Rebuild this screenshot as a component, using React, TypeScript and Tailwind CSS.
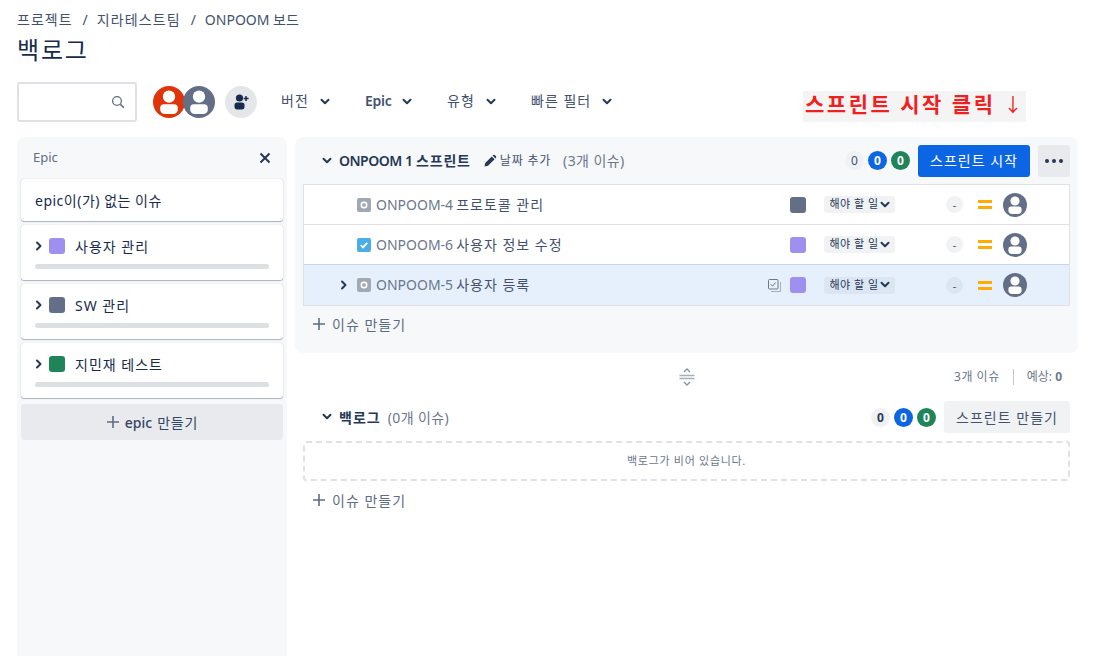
const font = "font-['Noto_Sans','Noto_Sans_CJK_KR',sans-serif]";

const Avatar = ({ color, size }: { color: string; size: number }) => (
  <svg width={size} height={size} viewBox="0 0 24 24" className="shrink-0">
    <circle cx="12" cy="12" r="12" fill={color} />
    <circle cx="12" cy="8" r="4.6" fill="#fff" />
    <path d="M5.4 16.4a2.8 2.8 0 0 1 2.8-2.8h7.6a2.8 2.8 0 0 1 2.8 2.8v1.4c0 1.9-1.6 3.2-3.4 3.2H8.8c-1.8 0-3.4-1.3-3.4-3.2z" fill="#fff" />
  </svg>
);

const ChevronDown = ({ className = "" }: { className?: string }) => (
  <svg width="10" height="8" viewBox="0 0 10 8" className={className}>
    <path d="M1.5 1.8 5 5.3l3.5-3.5" fill="none" stroke="#253858" strokeWidth="2" strokeLinecap="round" strokeLinejoin="round" />
  </svg>
);

const ChevronRight = () => (
  <svg width="8" height="10" viewBox="0 0 8 10" className="shrink-0">
    <path d="M2 1.5 5.5 5 2 8.5" fill="none" stroke="#253858" strokeWidth="2" strokeLinecap="round" strokeLinejoin="round" />
  </svg>
);

const Plus = () => (
  <svg width="14" height="14" viewBox="0 0 14 14" className="shrink-0">
    <path d="M7 1v12M1 7h12" stroke="#5e6c84" strokeWidth="1.6" />
  </svg>
);

const TaskIcon = ({ done }: { done?: boolean }) =>
  done ? (
    <svg width="14" height="14" viewBox="0 0 14 14" className="shrink-0">
      <rect width="14" height="14" rx="2" fill="#4bade8" />
      <path d="M3.8 7.2 6 9.4l4.2-4.6" fill="none" stroke="#fff" strokeWidth="1.8" />
    </svg>
  ) : (
    <svg width="14" height="14" viewBox="0 0 14 14" className="shrink-0">
      <rect width="14" height="14" rx="2" fill="#a0a8b4" />
      <rect x="4.4" y="4.4" width="5.2" height="5.2" rx="2.2" fill="none" stroke="#fff" strokeWidth="1.6" />
    </svg>
  );

const Counts = ({ dark }: { dark?: boolean }) => (
  <div className="flex items-center gap-[4px] text-[12px] leading-[19px]">
    <span className={`h-[19px] w-[19px] rounded-full bg-[#f0f1f4] text-center ${dark ? "font-bold text-[#253858]" : "text-[#42526e]"}`}>0</span>
    <span className="h-[19px] w-[19px] rounded-full bg-[#0c66e4] text-center font-bold text-white">0</span>
    <span className="h-[19px] w-[19px] rounded-full bg-[#1f845a] text-center font-bold text-white">0</span>
  </div>
);

const EpicCard = ({ name, color }: { name: string; color: string }) => (
  <div className="h-[55px] rounded-[3px] bg-white px-[14px] pt-[13px] shadow-[0_1px_1px_rgba(9,30,66,0.3),0_0_1px_rgba(9,30,66,0.25)]">
    <div className="flex h-[16px] items-center">
      <ChevronRight />
      <span className={`ml-[6px] h-[16px] w-[16px] rounded-[3px] ${color}`} />
      <span className="ml-[10px] text-[14px] tracking-[1px] text-[#172b4d]">{name}</span>
    </div>
    <div className="mt-[10px] h-[5px] rounded-[3px] bg-[#dcdfe4]" />
  </div>
);

const IssueRow = ({
  id,
  title,
  epic,
  done,
  selected,
}: {
  id: string;
  title: string;
  epic: string;
  done?: boolean;
  selected?: boolean;
}) => (
  <div
    className={`flex items-center ${
      selected ? "h-[41px] border-t border-[#c9d4e4] bg-[#e6f0fc]" : "h-[40px] border-t border-[#dfe1e6] first:h-[39px] first:border-t-0"
    }`}
  >
    <div className="flex w-[53px] justify-end pr-[9px]">{selected && <ChevronRight />}</div>
    <TaskIcon done={done} />
    <span className="-mt-[1px] ml-[5px] text-[14px] text-[#6b778c]">{id}</span>
    <span className="-mt-[1px] ml-[3px] text-[14px] tracking-[1px] text-[#42526e]">{title}</span>
    <div className="ml-auto flex items-center">
      {selected && (
        <svg width="13" height="13" viewBox="0 0 13 13" className="mr-[9px] shrink-0">
          <rect x="0.5" y="0.5" width="9.5" height="9.5" rx="1" fill="none" stroke="#6b778c" />
          <path d="M2.7 5.2 4.6 7.2l3-3.7" fill="none" stroke="#6b778c" />
          <path d="M12.5 3v9.5H3" fill="none" stroke="#a5adba" />
        </svg>
      )}
      <span className={`h-[16px] w-[16px] rounded-[3px] ${epic}`} />
      <div
        className={`ml-[18px] flex h-[17px] w-[71px] items-center justify-center gap-[1px] rounded-[3px] text-[11px] tracking-[0.5px] text-[#253858] ${
          selected ? "bg-[#dce6f3]" : "bg-[#f1f2f4]"
        }`}
      >
        해야 할 일
        <ChevronDown />
      </div>
      <span
        className={`ml-[51px] h-[17px] w-[17px] rounded-full text-center text-[11px] leading-[17px] text-[#42526e] ${
          selected ? "bg-[#dce6f3]" : "bg-[#f1f2f4]"
        }`}
      >
        -
      </span>
      <div className="ml-[15px] flex w-[14px] flex-col gap-[3px]">
        <span className="h-[3px] bg-[#ffab00]" />
        <span className="h-[3px] bg-[#ffab00]" />
      </div>
      <div className="ml-[11px] mr-[42px]">
        <Avatar color="#626f86" size={24} />
      </div>
    </div>
  </div>
);

const CreateIssue = () => (
  <div className="flex h-[20px] items-center gap-[6px] pl-[9px] text-[14px] tracking-[1px] text-[#5e6c84]">
    <Plus />
    이슈 만들기
  </div>
);

const Filter = ({ label, width, bold }: { label: string; width: number; bold?: boolean }) => (
  <div className="flex items-center justify-between" style={{ width }}>
    <span className={`-mt-[3px] text-[14px] text-[#42526e] ${bold ? "font-semibold tracking-[-0.3px]" : "tracking-[1px]"}`}>{label}</span>
    <ChevronDown />
  </div>
);

export default function App() {
  return (
    <div className={`${font} h-[656px] w-[1100px] overflow-hidden bg-white pl-[17px] pr-[22px] text-[#172b4d]`}>
      <div className="flex h-[20px] items-center pt-[20px] text-[14px] leading-none text-[#42526e]">
        <span className="tracking-[1px]">프로젝트</span>
        <span className="ml-[10px] mr-[9px]">/</span>
        <span className="tracking-[1.1px]">지라테스트팀</span>
        <span className="ml-[10px] mr-[9px]">/</span>
        <span>ONPOOM 보드</span>
      </div>
      <h1 className="mt-[14px] h-[32px] text-[24px] leading-[32px] tracking-[1.8px] text-[#172b4d]">백로그</h1>

      <div className="mt-[16px] flex h-[40px] items-center">
        <div className="flex h-[40px] w-[120px] items-center justify-end rounded-[3px] border-2 border-[#dfe1e6] pr-[10px]">
          <svg width="14" height="14" viewBox="0 0 14 14">
            <circle cx="6" cy="6" r="4.4" fill="none" stroke="#5e6c84" strokeWidth="1.3" />
            <path d="m9.4 9.4 3.4 3.4" stroke="#5e6c84" strokeWidth="1.5" />
          </svg>
        </div>
        <div className="ml-[16px] flex">
          <Avatar color="#de350b" size={32} />
          <div className="-ml-[2px]">
            <Avatar color="#626f86" size={32} />
          </div>
        </div>
        <div className="ml-[10px] flex h-[32px] w-[32px] items-center justify-center rounded-full bg-[#e4e6ea]">
          <svg width="18" height="18" viewBox="0 0 18 18">
            <circle cx="7.5" cy="5" r="3.6" fill="#172b4d" />
            <path d="M2.5 12a2.5 2.5 0 0 1 2.5-2.5h5a2.5 2.5 0 0 1 2.5 2.5v2.2c0 1.2-1 2.3-2.5 2.3H5c-1.5 0-2.5-1.1-2.5-2.3z" fill="#172b4d" />
            <path d="M14 3v5M11.6 5.5h5" stroke="#172b4d" strokeWidth="1.5" />
          </svg>
        </div>
        <div className="ml-[24px] flex items-center gap-[35px]">
          <Filter label="버전" width={49} />
          <Filter label="Epic" width={47} bold />
          <Filter label="유형" width={49} />
          <Filter label="빠른 필터" width={81} />
        </div>
        <div className="ml-[191px] mt-[9px] flex h-[31px] w-[223px] items-center bg-[#f4f4f4] pb-[3px] pl-[2px] text-[21px] font-bold tracking-[2.5px] whitespace-nowrap text-[#f02020]">
          스프린트 시작 클릭
          <span className="ml-[8px] text-[19px] font-normal">↓</span>
        </div>
      </div>

      <div className="mt-[15px] flex gap-[8px]">
        <aside className="h-[519px] w-[270px] shrink-0 rounded-t-[8px] bg-[#f7f8f9] px-[4px]">
          <div className="flex h-[42px] items-center justify-between px-[12px]">
            <span className="text-[13px] text-[#5e6c84]">Epic</span>
            <svg width="12" height="12" viewBox="0 0 12 12">
              <path d="m1.5 1.5 9 9M10.5 1.5l-9 9" stroke="#253858" strokeWidth="2" />
            </svg>
          </div>
          <div className="flex flex-col gap-[4px]">
            <div className="flex h-[42px] items-center rounded-[3px] bg-white px-[14px] text-[14px] tracking-[0.5px] text-[#172b4d] shadow-[0_1px_1px_rgba(9,30,66,0.3),0_0_1px_rgba(9,30,66,0.25)]">
              epic이(가) 없는 이슈
            </div>
            <EpicCard name="사용자 관리" color="bg-[#9f8fef]" />
            <EpicCard name="SW 관리" color="bg-[#626f86]" />
            <EpicCard name="지민재 테스트" color="bg-[#1f845a]" />
          </div>
          <div className="mt-[6px] flex h-[36px] items-center justify-center gap-[5px] rounded-[3px] bg-[#e9eaed] text-[14px] text-[#344563]">
            <Plus />
            <span className="font-medium">epic</span>
            <span className="tracking-[0.8px]">만들기</span>
          </div>
        </aside>

        <main className="w-[783px]">
          <section className="h-[216px] rounded-[8px] bg-[#f7f8f9] px-[8px]">
            <div className="flex h-[47px] items-center">
              <ChevronDown className="ml-[19px]" />
              <span className="-mt-[1px] ml-[7px] text-[14px] font-semibold text-[#253858]">
                <span className="tracking-[-0.5px]">ONPOOM 1</span>{" "}
                <span className="tracking-[0.8px]">스프린트</span>
              </span>
              <svg width="14" height="14" viewBox="0 0 14 14" className="ml-[12px]">
                <path d="M1.5 12.5 2.2 9l6.6-6.6 2.8 2.8L5 11.8zM9.6 1.6l.7-.6a1 1 0 0 1 1.4 0l1.3 1.3a1 1 0 0 1 0 1.4l-.6.7z" fill="#253858" />
              </svg>
              <span className="ml-[3px] text-[12px] tracking-[0.8px] text-[#42526e]">날짜 추가</span>
              <span className="ml-[12px] text-[14px] tracking-[0.4px] text-[#6b778c]">(3개 이슈)</span>
              <div className="ml-auto flex items-center">
                <Counts />
                <div className="ml-[8px] flex h-[32px] w-[112px] items-center justify-center rounded-[3px] bg-[#0c66e4] text-[14px] tracking-[1px] text-white">
                  스프린트 시작
                </div>
                <div className="ml-[8px] flex h-[32px] w-[32px] items-center justify-center gap-[3px] rounded-[3px] bg-[#e9eaed]">
                  <span className="h-[4px] w-[4px] rounded-full bg-[#253858]" />
                  <span className="h-[4px] w-[4px] rounded-full bg-[#253858]" />
                  <span className="h-[4px] w-[4px] rounded-full bg-[#253858]" />
                </div>
              </div>
            </div>
            <div className="border border-[#dfe1e6] bg-white">
              <IssueRow id="ONPOOM-4" title="프로토콜 관리" epic="bg-[#626f86]" />
              <IssueRow id="ONPOOM-6" title="사용자 정보 수정" epic="bg-[#9f8fef]" done />
              <IssueRow id="ONPOOM-5" title="사용자 등록" epic="bg-[#9f8fef]" selected />
            </div>
            <div className="mt-[8px]">
              <CreateIssue />
            </div>
          </section>

          <div className="relative mt-[14px] flex h-[20px] items-center justify-end pr-[16px] text-[12px] text-[#6b778c]">
            <svg width="16" height="20" viewBox="0 0 16 20" className="absolute left-[384px] top-0">
              <path d="M5 5l3-3 3 3M5 15l3 3 3-3" fill="none" stroke="#8590a2" strokeWidth="1.3" />
              <path d="M0.5 8.5h15M0.5 11.5h15" stroke="#a5adba" strokeWidth="1.3" />
            </svg>
            <span className="tracking-[0.5px]">3개 이슈</span>
            <span className="mx-[13px] h-[16px] w-px bg-[#c1c7d0]" />
            <span>
              예상: <b>0</b>
            </span>
          </div>

          <div className="mt-[14px] flex h-[32px] items-center px-[8px]">
            <ChevronDown className="ml-[19px]" />
            <span className="ml-[7px] text-[14px] font-semibold tracking-[1px] text-[#253858]">백로그</span>
            <span className="ml-[7px] text-[14px] tracking-[0.4px] text-[#6b778c]">(0개 이슈)</span>
            <div className="ml-auto flex items-center">
              <Counts dark />
              <div className="ml-[8px] flex h-[32px] w-[126px] items-center justify-center rounded-[3px] bg-[#f1f2f4] text-[14px] tracking-[1px] text-[#42526e]">
                스프린트 만들기
              </div>
            </div>
          </div>
          <div className="mx-[8px] mt-[8px] flex h-[40px] items-center justify-center rounded-[3px] border-2 border-dashed border-[#dfe1e6] text-[11px] tracking-[0.7px] text-[#6b778c]">
            백로그가 비어 있습니다.
          </div>
          <div className="mt-[9px] px-[8px]">
            <CreateIssue />
          </div>
        </main>
      </div>
    </div>
  );
}
